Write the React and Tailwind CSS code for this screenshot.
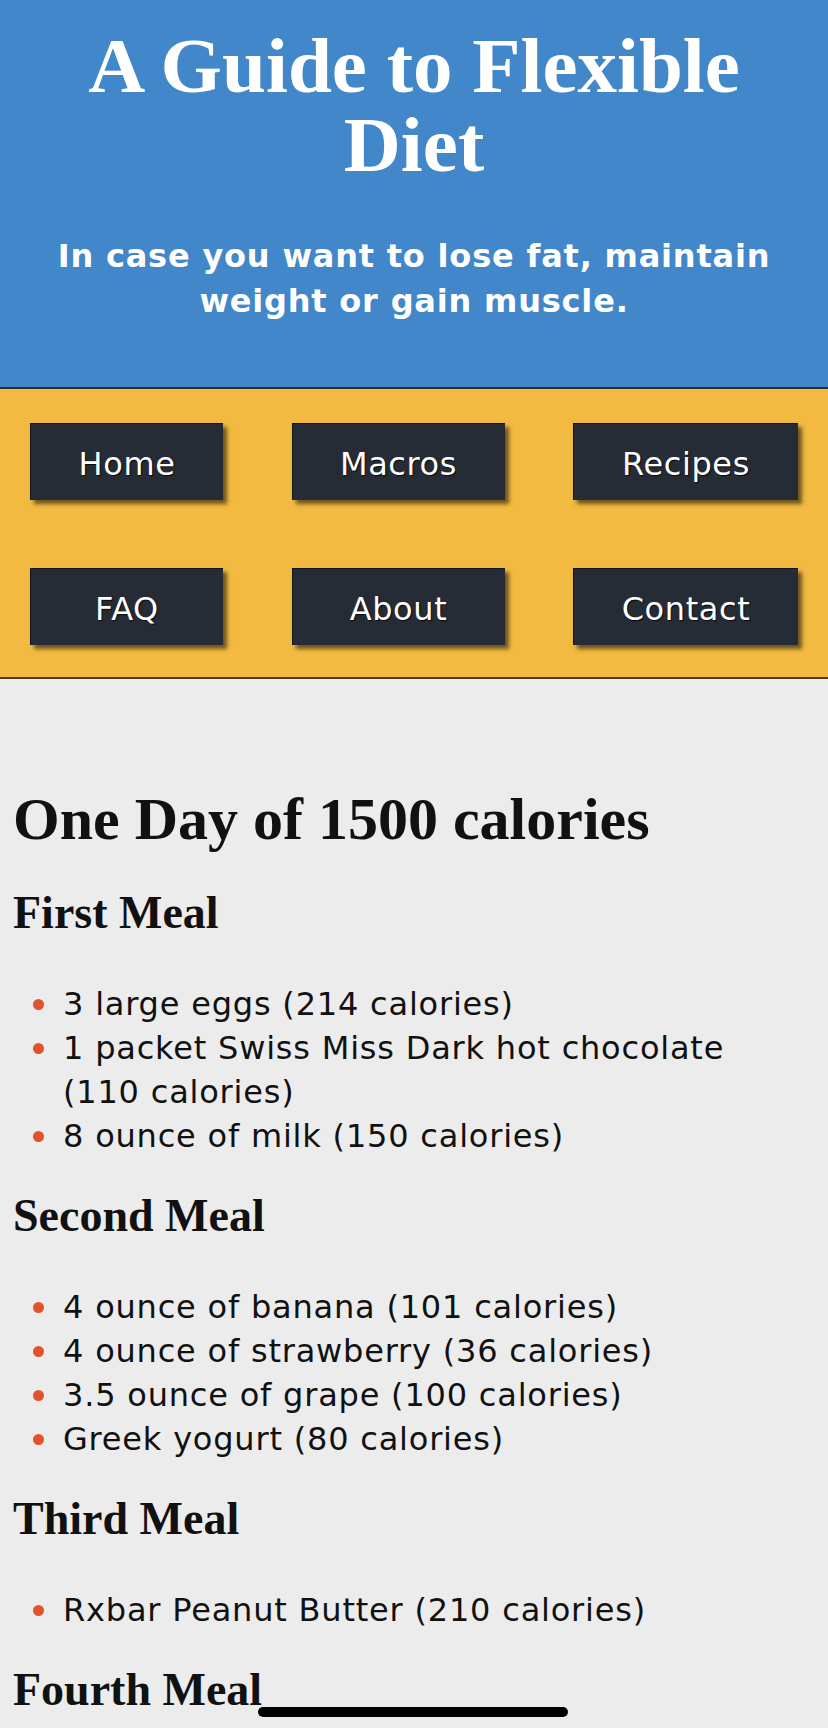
import React from "react";

const serif = { fontFamily: '"Liberation Serif", "Times New Roman", serif' };

function Meal({ title, items, first }) {
  return (
    <section>
      <h3
        className={`${first ? "mt-[35px]" : "mt-[32px]"} mb-[43px] text-[46px] leading-[52px] font-bold text-[#111]`}
        style={serif}
      >
        {title}
      </h3>
      <ul className="pr-[60px]">
        {items.map((it) => (
          <li key={it} className="flex text-[32px] leading-[44px] tracking-[0.8px] text-[#111]">
            <span className="w-[50px] shrink-0 flex justify-start">
              <span className="ml-[20px] mt-[17px] w-[11px] h-[11px] rounded-full bg-[#e1532d]" />
            </span>
            <span>{it}</span>
          </li>
        ))}
      </ul>
    </section>
  );
}

export default function App() {
  const navs = ["Home", "Macros", "Recipes", "FAQ", "About", "Contact"];
  return (
    <div
      className="relative min-h-screen bg-[#ececec]"
      style={{ fontFamily: '"DejaVu Sans", Verdana, sans-serif' }}
    >
      <header className="bg-[#4287c9] text-white text-center pt-[26px] pb-[63px] border-b-2 border-[#2d2d2a]">
        <h1 className="text-[79px] leading-[79px] font-bold px-[60px]" style={serif}>
          A Guide to Flexible Diet
        </h1>
        <p className="mt-[50px] text-[32px] leading-[45px] font-bold tracking-[0.8px] px-2">
          In case you want to lose fat, maintain weight or gain muscle.
        </p>
      </header>

      <nav className="bg-[#f2ba41] border-b-2 border-[#4a3d22] px-[30px] pt-[34px] pb-[32px]">
        <div className="grid grid-cols-[193px_213px_225px] justify-between gap-y-[68px]">
          {navs.map((n) => (
            <a
              key={n}
              className="h-[77px] flex items-center justify-center bg-[#262c35] text-white text-[32px] tracking-[0.6px] pt-[3px] border-t border-l border-[#111418] shadow-[4px_4px_4px_rgba(0,0,0,0.55)] [text-shadow:1px_1px_1px_rgba(0,0,0,0.8)]"
            >
              {n}
            </a>
          ))}
        </div>
      </nav>

      <main className="pl-[13px] pb-[12px]">
        <h2 className="mt-[107px] text-[60px] leading-[66px] font-bold text-[#111]" style={serif}>
          One Day of 1500 calories
        </h2>
        <Meal
          first
          title="First Meal"
          items={[
            "3 large eggs (214 calories)",
            "1 packet Swiss Miss Dark hot chocolate (110 calories)",
            "8 ounce of milk (150 calories)",
          ]}
        />
        <Meal
          title="Second Meal"
          items={[
            "4 ounce of banana (101 calories)",
            "4 ounce of strawberry (36 calories)",
            "3.5 ounce of grape (100 calories)",
            "Greek yogurt (80 calories)",
          ]}
        />
        <Meal title="Third Meal" items={["Rxbar Peanut Butter (210 calories)"]} />
        <h3 className="mt-[32px] text-[46px] leading-[52px] font-bold text-[#111]" style={serif}>
          Fourth Meal
        </h3>
      </main>

      <div className="fixed left-[258px] bottom-[11px] w-[310px] h-[10px] rounded-full bg-black" />
    </div>
  );
}
